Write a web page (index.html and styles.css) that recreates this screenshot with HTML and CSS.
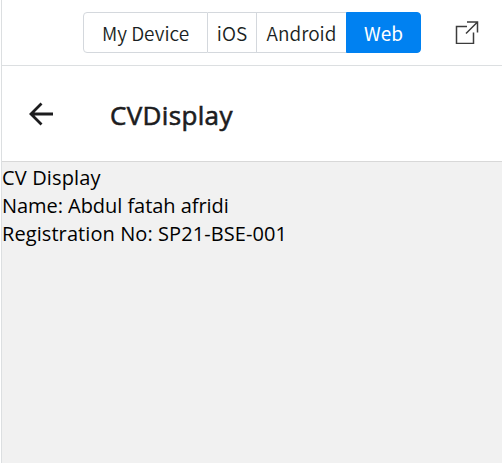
FILE: index.html
```html
<!DOCTYPE html>
<html lang="en">
<head>
<meta charset="utf-8">
<title>CVDisplay</title>
<link rel="stylesheet" href="styles.css">
</head>
<body>
<div class="panel">
  <header class="toolbar">
    <div class="tabs">
      <button class="tab device">My Device</button>
      <button class="tab ios">iOS</button>
      <button class="tab android">Android</button>
      <button class="tab web active">Web</button>
    </div>
    <svg class="popout" viewBox="0 0 24 24" width="24" height="24"><path d="M12 6.500H1.500V23.500H18.500V12.500M12 2H22.500V12.500M22.500 2L11 13.500"/></svg>
  </header>
  <nav class="navbar">
    <svg class="back" viewBox="0 0 24 24" width="24" height="24"><path d="M24 12H2M12.500 1.500L2 12L12.500 22.500"/></svg>
    <h1 class="title">CVDisplay</h1>
  </nav>
  <main class="content">
    <p class="heading">CV Display</p>
    <p class="name">Name: Abdul fatah afridi</p>
    <p class="registration">Registration No: SP21-BSE-001</p>
  </main>
</div>
</body>
</html>
```
FILE: styles.css
```css
* { box-sizing: border-box; }
body { margin: 0 0 0 1px; background: #fff; color: #1c1c1e; font-family: "Open Sans", "Noto Sans", sans-serif; }
.panel { height: 463px; border-left: 1px solid #dcdfe1; display: flex; flex-direction: column; }
.toolbar { height: 66px; flex: none; border-bottom: 1px solid #dcdfe1; display: flex; align-items: flex-start; padding: 12px 0 0 81px; }
.tabs { display: flex; width: 338px; height: 41px; }
.tab { border: 1px solid #d4d8dd; border-left: 0; padding: 0; background: #fff; font: 350 19px/39px "Noto Sans CJK SC", sans-serif; color: #1b1f23; white-space: nowrap; }
.device { width: 125px; border-left: 1px solid #d4d8dd; border-radius: 4px 0 0 4px; }
.ios { width: 49px; }
.android { width: 89px; border-right: 0; }
.web { flex: 1; border: 1px solid #0081f1; border-radius: 0 4px 4px 0; }
.active { background: #0081f1; color: #fff; font-weight: 400; }
.popout { margin: 8px 0 0 34px; fill: none; stroke: #3c3c3c; stroke-width: 1.5; }
.navbar { height: 96px; flex: none; border-bottom: 1px solid #d8d8d8; display: flex; align-items: center; padding-left: 27px; }
.back { fill: none; stroke: #1c1c1e; stroke-width: 2.8; }
.title { margin: 2px 0 0 57px; font: 400 26px/34px "Open Sans", sans-serif; letter-spacing: 0.35px; -webkit-text-stroke: 0.6px #1c1c1e; }
.content { flex: 1; background: #f1f1f1; padding-top: 2px; color: #000; }
.content p { margin: 0; font-size: 20px; line-height: 28px; white-space: nowrap; }
.content .heading { letter-spacing: 0.15px; }
.content .name { letter-spacing: -0.05px; }
.content .registration { letter-spacing: 0.08px; }
```
